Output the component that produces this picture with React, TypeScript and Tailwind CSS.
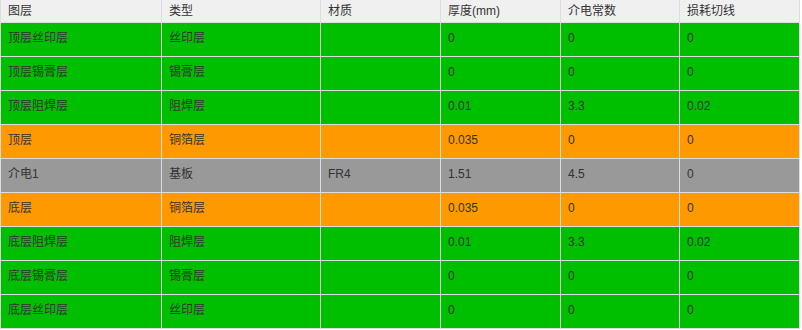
import React from 'react';

type Row = {
  layer: string;
  type: string;
  material: string;
  thickness: string;
  dk: string;
  df: string;
  bg: string;
};

const rows: Row[] = [
  { layer: '顶层丝印层', type: '丝印层', material: '', thickness: '0', dk: '0', df: '0', bg: 'bg-[#00bf00]' },
  { layer: '顶层锡膏层', type: '锡膏层', material: '', thickness: '0', dk: '0', df: '0', bg: 'bg-[#00bf00]' },
  { layer: '顶层阻焊层', type: '阻焊层', material: '', thickness: '0.01', dk: '3.3', df: '0.02', bg: 'bg-[#00bf00]' },
  { layer: '顶层', type: '铜箔层', material: '', thickness: '0.035', dk: '0', df: '0', bg: 'bg-[#ff9900]' },
  { layer: '介电1', type: '基板', material: 'FR4', thickness: '1.51', dk: '4.5', df: '0', bg: 'bg-[#999999]' },
  { layer: '底层', type: '铜箔层', material: '', thickness: '0.035', dk: '0', df: '0', bg: 'bg-[#ff9900]' },
  { layer: '底层阻焊层', type: '阻焊层', material: '', thickness: '0.01', dk: '3.3', df: '0.02', bg: 'bg-[#00bf00]' },
  { layer: '底层锡膏层', type: '锡膏层', material: '', thickness: '0', dk: '0', df: '0', bg: 'bg-[#00bf00]' },
  { layer: '底层丝印层', type: '丝印层', material: '', thickness: '0', dk: '0', df: '0', bg: 'bg-[#00bf00]' },
];

const headers = ['图层', '类型', '材质', '厚度(mm)', '介电常数', '损耗切线'];

const App = () => {
  return (
    <div className="w-[802px] h-[330px] bg-white text-[12px] text-[#333] font-['Liberation_Sans','Noto_Sans_CJK_SC',sans-serif]">
      <div className="w-[800px] grid grid-cols-[160px_158px_119px_119px_118px_119px] grid-rows-[22px_repeat(9,33px)] gap-px bg-[#dddddd] px-px pb-px">
        {headers.map((h) => (
          <div key={h} className="bg-[#f0f0f0] pl-[7px] flex items-center">
            {h}
          </div>
        ))}
        {rows.map((r) =>
          [r.layer, r.type, r.material, r.thickness, r.dk, r.df].map((v, i) => (
            <div key={r.layer + i} className={`${r.bg} pl-[7px] pb-[3px] flex items-center`}>
              {v}
            </div>
          ))
        )}
      </div>
    </div>
  );
};

export default App;
